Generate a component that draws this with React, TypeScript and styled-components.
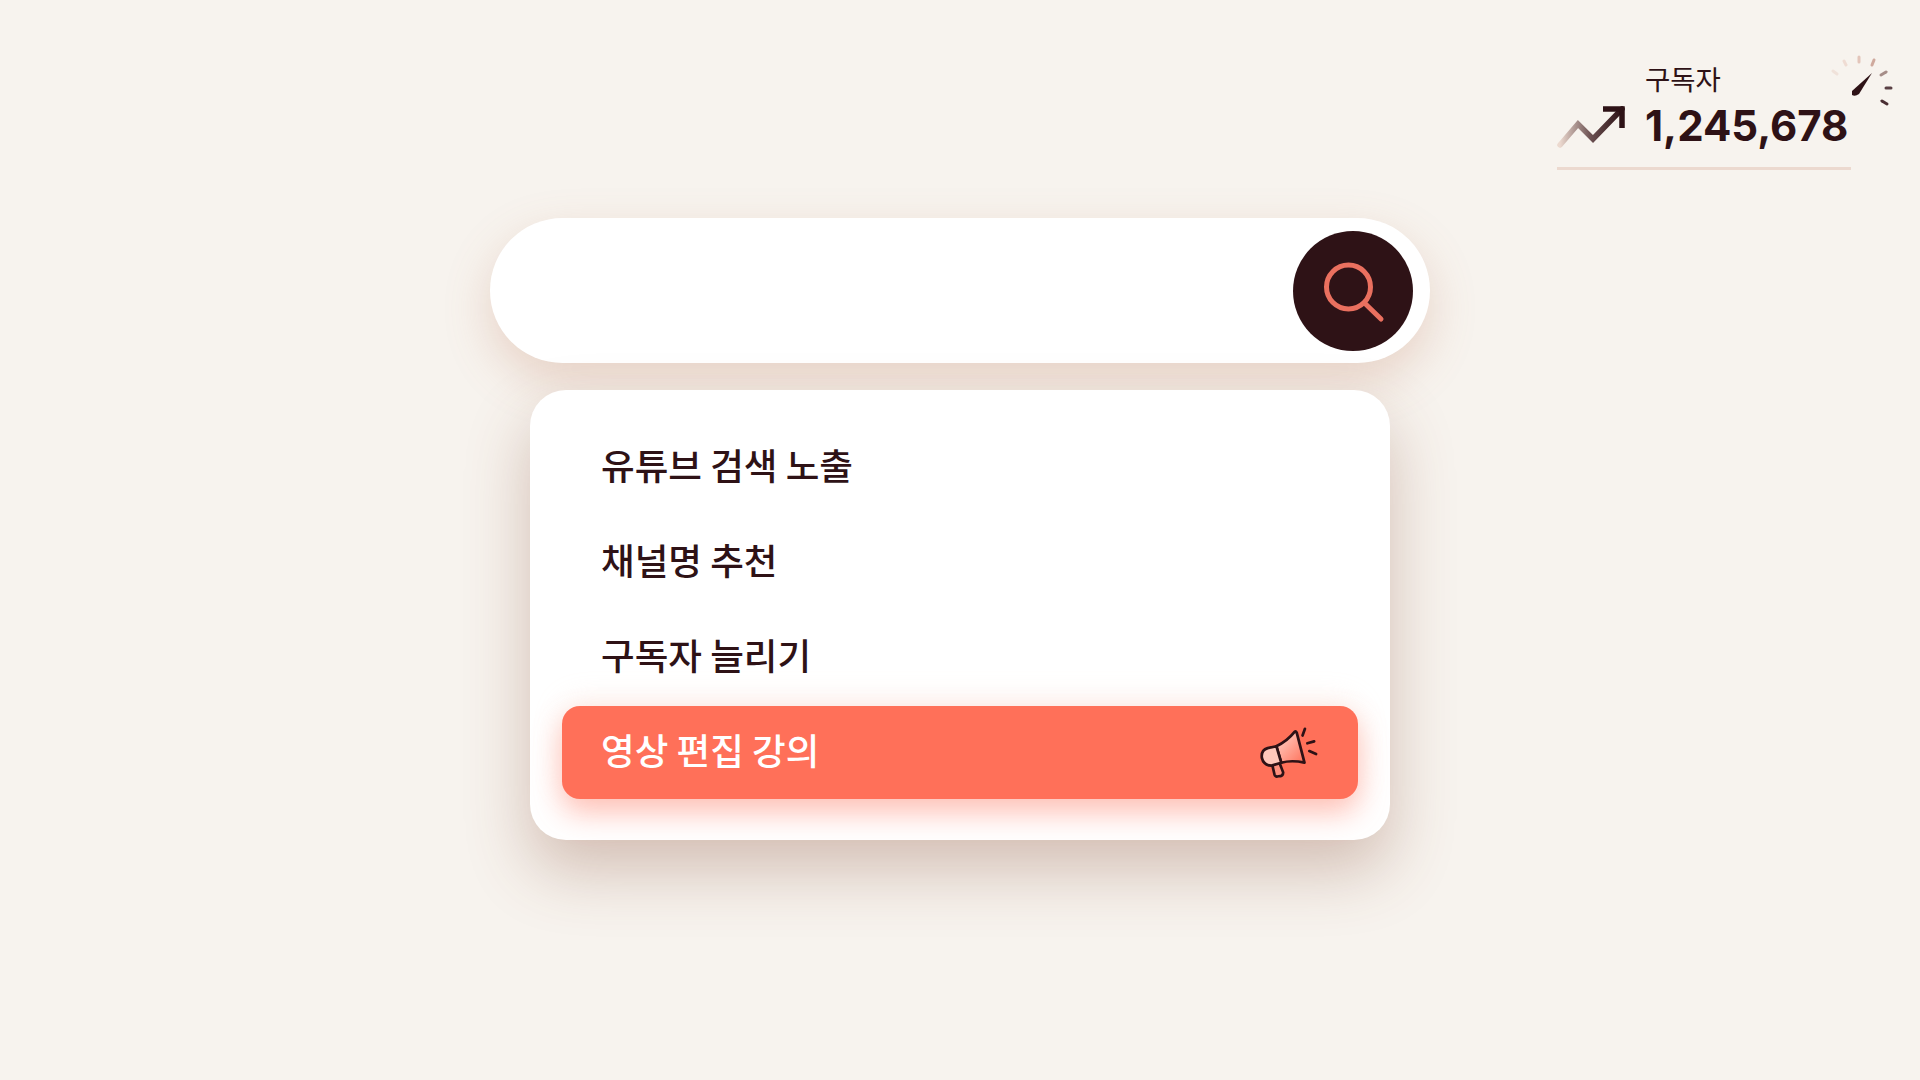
import React from 'react'
import styled, { createGlobalStyle } from 'styled-components'

const GlobalStyle = createGlobalStyle`
  html, body {
    margin: 0;
    padding: 0;
    background: #f7f3ee;
  }
`

const Page = styled.div`
  width: 1920px;
  height: 1080px;
  overflow: hidden;
  display: flex;
  flex-direction: column;
  align-items: center;
  background: #f7f3ee;
  font-family: "Noto Sans CJK KR", "Noto Sans", sans-serif;
  color: #2e1216;
`

const StatRow = styled.div`
  width: 100%;
  height: 218px;
  box-sizing: border-box;
  padding: 60px 69px 0 0;
  display: flex;
  justify-content: flex-end;
`

const Stat = styled.div`
  position: relative;
  width: 294px;
  height: 110px;
  box-sizing: border-box;
  border-bottom: 3px solid #ecd9cf;
  display: flex;
  gap: 15px;
`

const TrendIcon = styled.svg`
  width: 72px;
  height: 48px;
  margin-top: 42px;
  flex: none;
`

const StatText = styled.div`
  display: flex;
  flex-direction: column;
  margin-left: 1px;
`

const StatLabel = styled.div`
  font-size: 27.5px;
  line-height: 36px;
`

const StatValue = styled.div`
  font-family: Inter, "Noto Sans", sans-serif;
  font-size: 42px;
  line-height: 60px;
  font-weight: 700;
  letter-spacing: 0;
`

const GaugeIcon = styled.svg`
  position: absolute;
  top: -9px;
  right: -46px;
  width: 70px;
  height: 60px;
`

const SearchBar = styled.div`
  width: 940px;
  height: 145px;
  box-sizing: border-box;
  padding-right: 17px;
  flex: none;
  border-radius: 73px;
  background: #fff;
  box-shadow: 0 18px 46px rgba(190, 120, 90, 0.26);
  display: flex;
  align-items: center;
  justify-content: flex-end;
`

const SearchButton = styled.div`
  width: 120px;
  height: 120px;
  border-radius: 50%;
  background: #2e1216;
  display: flex;
  align-items: center;
  justify-content: center;
`

const Dropdown = styled.div`
  width: 860px;
  height: 450px;
  margin-top: 27px;
  box-sizing: border-box;
  padding: 27px 32px 0;
  flex: none;
  border-radius: 36px;
  background: #fff;
  box-shadow: 0 30px 64px rgba(130, 70, 45, 0.3);
  display: flex;
  flex-direction: column;
`

const Item = styled.div<{ $active?: boolean }>`
  height: ${p => (p.$active ? 93 : 95)}px;
  margin-top: ${p => (p.$active ? 4 : 0)}px;
  flex: none;
  box-sizing: border-box;
  padding: 0 39px;
  display: flex;
  align-items: center;
  justify-content: space-between;
  font-size: 36.6px;
  font-weight: 500;
  color: ${p => (p.$active ? '#fff' : '#2e1216')};
  background: ${p => (p.$active ? '#ff7059' : 'transparent')};
  border-radius: ${p => (p.$active ? 18 : 0)}px;
  box-shadow: ${p => (p.$active ? '0 14px 30px rgba(255, 112, 89, 0.42), 0 -6px 30px rgba(240, 200, 180, 0.2)' : 'none')};
`

const ItemLabel = styled.span<{ $active?: boolean }>`
  position: relative;
  top: ${p => (p.$active ? -3 : 0)}px;
`

const MegaphoneIcon = styled.svg`
  width: 62px;
  height: 56px;
  margin-right: 0;
  flex: none;
`

const ticks: { x1: number; y1: number; x2: number; y2: number; color: string }[] = [
  { x1: 6, y1: 20, x2: 10, y2: 23, color: '#f0e2da' },
  { x1: 17, y1: 10, x2: 19, y2: 14, color: '#efdcd3' },
  { x1: 32, y1: 6, x2: 32, y2: 11, color: '#e3c5ba' },
  { x1: 47, y1: 9, x2: 45, y2: 14, color: '#cfa99d' },
  { x1: 59, y1: 21, x2: 54, y2: 24, color: '#a68d88' },
  { x1: 64, y1: 37, x2: 59, y2: 37, color: '#5a4044' },
  { x1: 60, y1: 53, x2: 55, y2: 50, color: '#4a2e32' },
]

const App = () => {
  return (
    <>
      <GlobalStyle />
      <Page>
        <StatRow>
          <Stat>
            <TrendIcon viewBox="0 0 72 48" fill="none">
              <defs>
                <linearGradient id="trend" x1="0" y1="0" x2="1" y2="0">
                  <stop offset="0" stopColor="#ecd9cf" />
                  <stop offset="0.5" stopColor="#6a4f50" />
                  <stop offset="1" stopColor="#2e1216" />
                </linearGradient>
              </defs>
              <path
                d="M3 43 L21 22 L36 37 L65 7"
                stroke="url(#trend)"
                strokeWidth="5.5"
                strokeLinecap="round"
                strokeLinejoin="miter"
              />
              <path d="M46 7 H65 V26" stroke="#2e1216" strokeWidth="5.5" strokeLinecap="butt" />
            </TrendIcon>
            <StatText>
              <StatLabel>구독자</StatLabel>
              <StatValue>1,245,678</StatValue>
            </StatText>
            <GaugeIcon viewBox="0 0 70 60" fill="none">
              {ticks.map((t, i) => (
                <line key={i} x1={t.x1} y1={t.y1} x2={t.x2} y2={t.y2} stroke={t.color} strokeWidth="3" strokeLinecap="round" />
              ))}
              <path d="M25 40 L45 22 L32 43 Q28 46 25 44 Z" fill="#2e1216" />
            </GaugeIcon>
          </Stat>
        </StatRow>
        <SearchBar>
          <SearchButton>
            <svg width="64" height="64" viewBox="0 0 64 64" fill="none">
              <circle cx="27.5" cy="28" r="22" stroke="#ea705f" strokeWidth="5" />
              <line x1="43.5" y1="44" x2="60" y2="60" stroke="#ea705f" strokeWidth="5" strokeLinecap="round" />
            </svg>
          </SearchButton>
        </SearchBar>
        <Dropdown>
          <Item><ItemLabel>유튜브 검색 노출</ItemLabel></Item>
          <Item><ItemLabel>채널명 추천</ItemLabel></Item>
          <Item><ItemLabel>구독자 늘리기</ItemLabel></Item>
          <Item $active>
            <ItemLabel $active>영상 편집 강의</ItemLabel>
            <MegaphoneIcon viewBox="0 0 64 56" fill="none">
              <defs>
                <linearGradient id="horn" x1="0" y1="0" x2="1" y2="1">
                  <stop offset="0" stopColor="#ffd9cf" />
                  <stop offset="1" stopColor="#ff7059" />
                </linearGradient>
              </defs>
              <path
                d="M15 37 L22 35 L27 48 Q27 52 22 52 Q19 53 18 50 Z"
                fill="#ff8f7d"
                stroke="#2e1216"
                strokeWidth="2.8"
                strokeLinejoin="round"
              />
              <path
                d="M20 21 Q31 16 39 6 Q40 5 41 7 L49 38 Q36 35 25 38 Z"
                fill="url(#horn)"
                stroke="#2e1216"
                strokeWidth="2.8"
                strokeLinejoin="round"
              />
              <path
                d="M20 21 L25 38 L15 41 Q7 41 5 33 Q4 25 11 23 Z"
                fill="#ffc7ba"
                stroke="#2e1216"
                strokeWidth="2.8"
                strokeLinejoin="round"
              />
              <path
                d="M47 10 L49.5 3 M52 18 L59 16 M54 26 L61 29"
                stroke="#2e1216"
                strokeWidth="2.8"
                strokeLinecap="round"
              />
            </MegaphoneIcon>
          </Item>
        </Dropdown>
      </Page>
    </>
  )
}

export default App
